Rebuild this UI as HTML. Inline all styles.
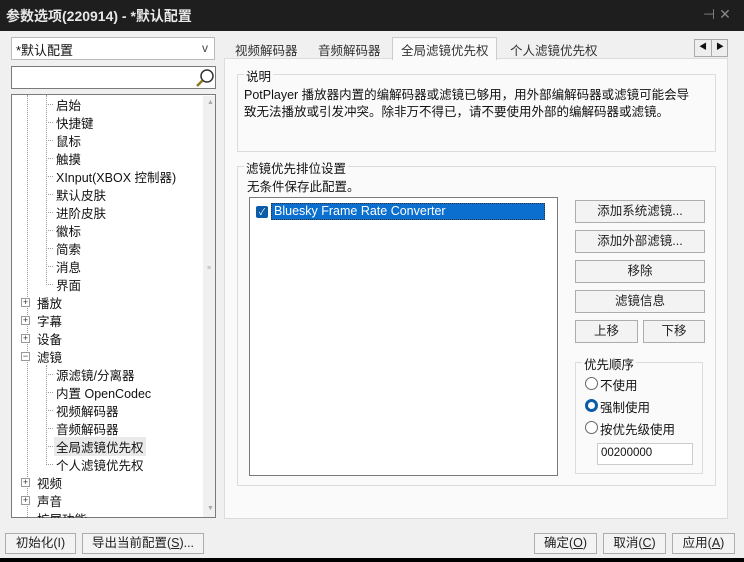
<!DOCTYPE html><html><head><meta charset="utf-8"><style>
*{box-sizing:border-box;margin:0;padding:0}
body{width:744px;height:562px;background:#000;font-family:"Liberation Sans","Noto Sans CJK SC",sans-serif;font-size:12px;color:#111;position:relative;overflow:hidden}
.a{position:absolute}
#title{left:0;top:0;width:744px;height:31px;background:#1e1e1e;color:#e8e8e8;font-size:14px;font-weight:bold;padding:6px 0 0 6px}
#body{left:0;top:31px;width:744px;height:527px;background:#f0f0f0}
.box{background:#fff;border:1px solid #7a7a7a}
.btn{position:absolute;background:#f3f3f3;border:1px solid #adadad;text-align:center;font-size:12.5px;line-height:20px;color:#222}
.t{position:absolute;font-size:12.5px;white-space:nowrap}
.grp{position:absolute;border:1px solid #dcdcdc}
.lg{position:absolute;top:-9px;left:6px;background:#fafafa;padding:0 2px;font-size:12.5px}
.pm{position:absolute;width:9px;height:9px;border:1px solid #999;background:#fff;font-size:9px;line-height:7px;text-align:center;color:#333}
.dot{position:absolute;border-top:1px dotted #999;width:7px}
</style></head><body>
<div id="title" class="a">参数选项(220914) - *默认配置<span style="position:absolute;left:703px;top:6px;color:#888;font-weight:normal">⊣ ✕</span></div>
<div id="body" class="a"></div>
<div class="a" style="left:11px;top:37px;width:204px;height:23px;background:#fff;border:1px solid #bbb;font-size:13px;padding:2px 4px">*默认配置<span style="position:absolute;right:6px;top:3px;font-size:12px;color:#444">v</span></div>
<div class="a box" style="left:11px;top:66px;width:205px;height:23px">
<svg class="a" style="left:182px;top:1px" width="22" height="20"><circle cx="13" cy="8" r="6" fill="none" stroke="#333" stroke-width="1.5"/><line x1="8.5" y1="12.5" x2="3" y2="18" stroke="#8a7a20" stroke-width="2.5"/></svg></div>
<div class="a box" style="left:11px;top:94px;width:205px;height:424px;overflow:hidden">
<div class="a" style="left:191px;top:1px;width:12px;height:421px;background:#f0f0f0"></div>
<div class="a" style="left:195px;top:4px;font-size:7px;color:#aaa">▲</div>
<div class="a" style="left:195px;top:170px;font-size:7px;color:#aaa">≡</div>
<div class="a" style="left:195px;top:410px;font-size:7px;color:#aaa">▼</div>
<div class="a" style="left:15px;top:0;height:424px;border-left:1px dotted #999"></div>
<div class="a" style="left:34px;top:0;height:190px;border-left:1px dotted #999"></div>
<div class="a" style="left:34px;top:270px;height:100px;border-left:1px dotted #999"></div>
</div>
<div class="a" style="left:11px;top:94px;width:200px;height:424px;overflow:hidden">
<div class="t" style="left:45px;top:1px">启始</div><div class="dot" style="left:35px;top:10px"></div>
<div class="t" style="left:45px;top:19px">快捷键</div><div class="dot" style="left:35px;top:28px"></div>
<div class="t" style="left:45px;top:37px">鼠标</div><div class="dot" style="left:35px;top:46px"></div>
<div class="t" style="left:45px;top:55px">触摸</div><div class="dot" style="left:35px;top:64px"></div>
<div class="t" style="left:45px;top:73px">XInput(XBOX 控制器)</div><div class="dot" style="left:35px;top:82px"></div>
<div class="t" style="left:45px;top:91px">默认皮肤</div><div class="dot" style="left:35px;top:100px"></div>
<div class="t" style="left:45px;top:109px">进阶皮肤</div><div class="dot" style="left:35px;top:118px"></div>
<div class="t" style="left:45px;top:127px">徽标</div><div class="dot" style="left:35px;top:136px"></div>
<div class="t" style="left:45px;top:145px">简索</div><div class="dot" style="left:35px;top:154px"></div>
<div class="t" style="left:45px;top:163px">消息</div><div class="dot" style="left:35px;top:172px"></div>
<div class="t" style="left:45px;top:181px">界面</div><div class="dot" style="left:35px;top:190px"></div>
<div class="pm" style="left:10px;top:204px">+</div><div class="t" style="left:26px;top:199px">播放</div>
<div class="pm" style="left:10px;top:222px">+</div><div class="t" style="left:26px;top:217px">字幕</div>
<div class="pm" style="left:10px;top:240px">+</div><div class="t" style="left:26px;top:235px">设备</div>
<div class="pm" style="left:10px;top:258px">−</div><div class="t" style="left:26px;top:253px">滤镜</div>
<div class="t" style="left:45px;top:271px">源滤镜/分离器</div><div class="dot" style="left:35px;top:280px"></div>
<div class="t" style="left:45px;top:289px">内置 OpenCodec</div><div class="dot" style="left:35px;top:298px"></div>
<div class="t" style="left:45px;top:307px">视频解码器</div><div class="dot" style="left:35px;top:316px"></div>
<div class="t" style="left:45px;top:325px">音频解码器</div><div class="dot" style="left:35px;top:334px"></div>
<div class="t" style="left:43px;top:343px;background:#eaeaea;padding:0 2px">全局滤镜优先权</div><div class="dot" style="left:35px;top:352px"></div>
<div class="t" style="left:45px;top:361px">个人滤镜优先权</div><div class="dot" style="left:35px;top:370px"></div>
<div class="pm" style="left:10px;top:384px">+</div><div class="t" style="left:26px;top:379px">视频</div>
<div class="pm" style="left:10px;top:402px">+</div><div class="t" style="left:26px;top:397px">声音</div>
<div class="t" style="left:26px;top:415px">扩展功能</div>
</div>
<div class="a" style="left:224px;top:58px;width:504px;height:461px;background:#fafafa;border:1px solid #dcdcdc"></div>
<div class="t" style="left:235px;top:40px;color:#333">视频解码器</div>
<div class="t" style="left:318px;top:40px;color:#333">音频解码器</div>
<div class="a" style="left:392px;top:37px;width:105px;height:23px;background:#fafafa;border:1px solid #ccc;border-bottom:none"></div>
<div class="t" style="left:401px;top:40px;color:#333">全局滤镜优先权</div>
<div class="t" style="left:510px;top:40px;color:#333">个人滤镜优先权</div>
<div class="a" style="left:694px;top:39px;width:34px;height:18px;border:1px solid #aaa;background:#eee"><div class="a" style="left:16px;top:0;height:16px;border-left:1px solid #aaa"></div><span class="a" style="left:4px;top:1px;font-size:8px">◀</span><span class="a" style="left:21px;top:1px;font-size:8px">▶</span></div>
<div class="grp" style="left:237px;top:74px;width:479px;height:78px;background:#fafafa"><div class="lg">说明</div>
<div class="t" style="left:6px;top:12px;line-height:17px">PotPlayer 播放器内置的编解码器或滤镜已够用，用外部编解码器或滤镜可能会导<br>致无法播放或引发冲突。除非万不得已，请不要使用外部的编解码器或滤镜。</div></div>
<div class="grp" style="left:237px;top:166px;width:479px;height:320px"><div class="lg">滤镜优先排位设置</div>
<div class="t" style="left:9px;top:9px">无条件保存此配置。</div></div>
<div class="a box" style="left:249px;top:197px;width:309px;height:279px">
<div class="a" style="left:6px;top:8px;width:12px;height:12px;background:#0a5ca8;border-radius:2px;color:#fff;font-size:9px;line-height:12px;text-align:center">✓</div>
<div class="a" style="left:21px;top:5px;width:274px;height:17px;background:#0a6fcf;border:1px dotted #333;color:#fff;font-size:12.5px;padding-left:2px;line-height:15px">Bluesky Frame Rate Converter</div></div>
<div class="btn" style="left:575px;top:200px;width:130px;height:23px">添加系统滤镜...</div>
<div class="btn" style="left:575px;top:230px;width:130px;height:23px">添加外部滤镜...</div>
<div class="btn" style="left:575px;top:260px;width:130px;height:23px">移除</div>
<div class="btn" style="left:575px;top:290px;width:130px;height:23px">滤镜信息</div>
<div class="btn" style="left:575px;top:320px;width:63px;height:23px">上移</div>
<div class="btn" style="left:643px;top:320px;width:62px;height:23px">下移</div>
<div class="grp" style="left:575px;top:362px;width:128px;height:112px"><div class="lg">优先顺序</div>
<div class="a" style="left:9px;top:14px;width:13px;height:13px;border:1px solid #666;border-radius:50%;background:#fff"></div><div class="t" style="left:24px;top:12px">不使用</div>
<div class="a" style="left:9px;top:36px;width:13px;height:13px;border:3.5px solid #0a5ca8;border-radius:50%;background:#fff"></div><div class="t" style="left:24px;top:34px">强制使用</div>
<div class="a" style="left:9px;top:58px;width:13px;height:13px;border:1px solid #666;border-radius:50%;background:#fff"></div><div class="t" style="left:24px;top:56px">按优先级使用</div>
<div class="a" style="left:21px;top:80px;width:96px;height:22px;background:#fff;border:1px solid #ccc;font-size:11.5px;padding:3px 3px">00200000</div></div>
<div class="btn" style="left:5px;top:533px;width:71px;height:21px;line-height:19px">初始化(I)</div>
<div class="btn" style="left:82px;top:533px;width:122px;height:21px;line-height:19px">导出当前配置(<u>S</u>)...</div>
<div class="btn" style="left:534px;top:533px;width:63px;height:21px;line-height:19px">确定(<u>O</u>)</div>
<div class="btn" style="left:603px;top:533px;width:63px;height:21px;line-height:19px">取消(<u>C</u>)</div>
<div class="btn" style="left:672px;top:533px;width:63px;height:21px;line-height:19px">应用(<u>A</u>)</div>
</body></html>
